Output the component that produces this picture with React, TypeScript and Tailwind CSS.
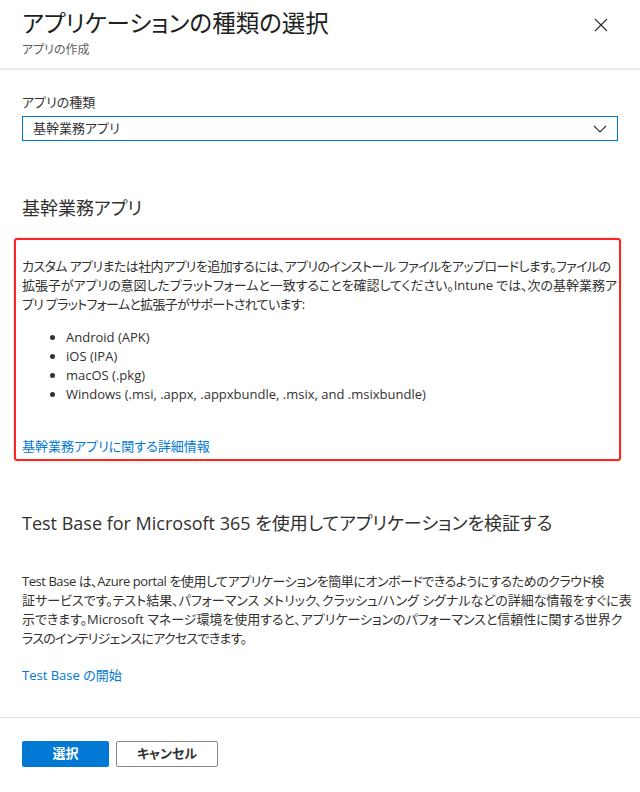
const font = "font-['Open_Sans','Noto_Sans_CJK_JP',sans-serif] [font-feature-settings:'palt']";

function CloseIcon() {
  return (
    <svg width="14" height="14" viewBox="0 0 14 14" fill="none" stroke="#323130" strokeWidth="1.2">
      <path d="M1 1 L13 13 M13 1 L1 13" />
    </svg>
  );
}

function Chevron() {
  return (
    <svg width="14" height="8" viewBox="0 0 14 8" fill="none" stroke="#323130" strokeWidth="1.1">
      <path d="M1 1 L7 7 L13 1" />
    </svg>
  );
}

export default function App() {
  return (
    <div className={`w-[640px] h-[792px] bg-white text-[#323130] flex flex-col ${font}`}>
      {/* header */}
      <div className="flex justify-between px-[22px] pt-[7px] pb-[10px] border-b-2 border-[#ececec]">
        <div className="flex flex-col">
          <h1 className="text-[23.5px] leading-[32px] text-[#201f1e]">アプリケーションの種類の選択</h1>
          <p className="mt-[3px] text-[12px] leading-[16px] text-[#605e5c]">アプリの作成</p>
        </div>
        <button className="mt-[11px] mr-[10px] h-[14px] w-[14px]">
          <CloseIcon />
        </button>
      </div>

      {/* body */}
      <div className="flex-1 px-[22px] pt-[23px]">
        <label className="block text-[13px] leading-[18px]">アプリの種類</label>
        <div className="mt-[5px] h-[25px] flex items-center justify-between border border-[#0078d4] pl-[10px] pr-[10px] text-[13px]">
          <span>基幹業務アプリ</span>
          <Chevron />
        </div>

        <h2 className="mt-[55px] text-[18px] leading-[24px]">基幹業務アプリ</h2>

        <div className="mt-[18px] ml-[-8px] mr-[-3px] rounded-[3px] border-2 border-[#ff2424] shadow-[0_0_3px_rgba(0,0,0,0.18)] pl-[6px] pr-[2px] pt-[17px] pb-[3px] text-[13px] leading-[19px]">
          <p className="whitespace-nowrap">
            <span className="tracking-[-0.6px]">
              カスタム アプリまたは社内アプリを追加するには、アプリのインストール ファイルをアップロードします。ファイルの
            </span>
            <br />
            <span className="tracking-[-0.05px]">
              拡張子がアプリの意図したプラットフォームと一致することを確認してください。Intune では、次の基幹業務ア
            </span>
            <br />
            <span className="tracking-[-0.7px]">プリ プラットフォームと拡張子がサポートされています:</span>
          </p>
          <ul className="mt-[14px] list-disc pl-[44px]">
            <li>Android (APK)</li>
            <li>iOS (IPA)</li>
            <li>macOS (.pkg)</li>
            <li>Windows (.msi, .appx, .appxbundle, .msix, and .msixbundle)</li>
          </ul>
          <a className="mt-[33px] block text-[#0078d4]">基幹業務アプリに関する詳細情報</a>
        </div>

        <h2 className="mt-[50px] text-[18px] leading-[24px]">
          Test Base for Microsoft 365 を使用してアプリケーションを検証する
        </h2>
        <p className="mt-[37px] whitespace-nowrap text-[13px] leading-[19px]">
          <span className="tracking-[-0.45px]">
            Test Base は、Azure portal を使用してアプリケーションを簡単にオンボードできるようにするためのクラウド検
          </span>
          <br />
          <span>
            証サービスです。テスト結果、パフォーマンス メトリック、クラッシュ/ハング シグナルなどの詳細な情報をすぐに表
          </span>
          <br />
          <span className="tracking-[-0.05px]">
            示できます。Microsoft マネージ環境を使用すると、アプリケーションのパフォーマンスと信頼性に関する世界ク
          </span>
          <br />
          <span className="tracking-[-0.7px]">ラスのインテリジェンスにアクセスできます。</span>
        </p>
        <a className="mt-[18px] block text-[13px] leading-[19px] text-[#0078d4]">Test Base の開始</a>
      </div>

      {/* footer */}
      <div className="border-t border-[#e1dfdd] px-[22px] pt-[23px] pb-[25px] flex gap-[7px]">
        <button className="h-[26px] w-[87px] rounded-[2px] bg-[#0078d4] text-[13px] font-semibold text-white">
          選択
        </button>
        <button className="h-[26px] w-[102px] rounded-[2px] border border-[#8a8886] text-[13px] font-semibold">
          キャンセル
        </button>
      </div>
    </div>
  );
}
